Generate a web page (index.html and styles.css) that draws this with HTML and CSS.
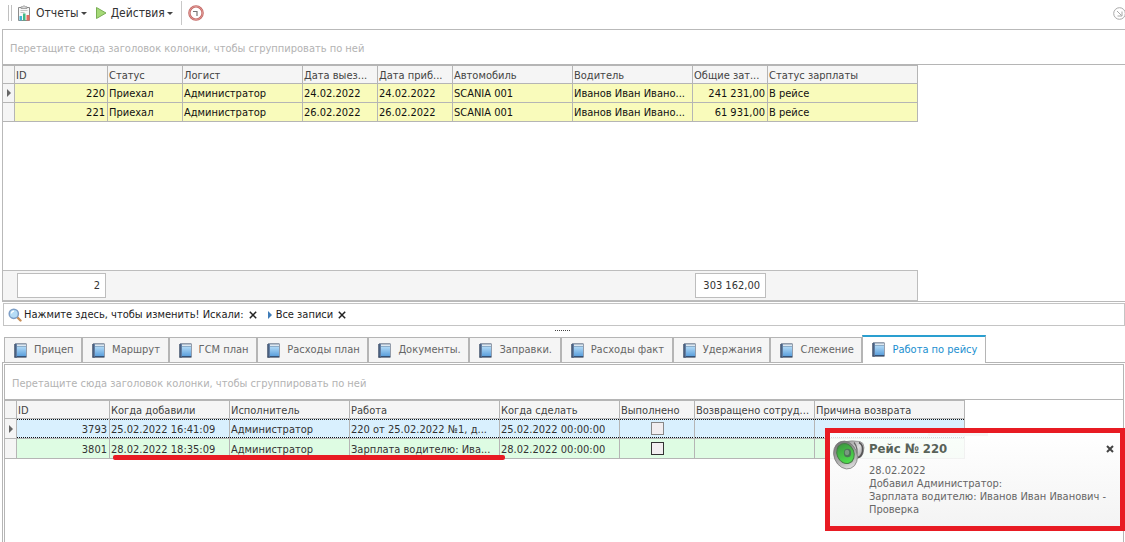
FILE: index.html
```html
<!DOCTYPE html>
<html lang="ru">
<head>
<meta charset="utf-8">
<title>Рейсы</title>
<link rel="stylesheet" href="styles.css">
</head>
<body>
<svg class="defs" aria-hidden="true">
  <defs>
    <linearGradient id="blue" x1="0" y1="0" x2="0" y2="1"><stop offset="0" stop-color="#b4dcf8"/><stop offset="1" stop-color="#5a9edb"/></linearGradient>
    <linearGradient id="spine" x1="0" y1="0" x2="1" y2="0"><stop offset="0" stop-color="#2b3d59"/><stop offset="1" stop-color="#6f8db3"/></linearGradient>
    <linearGradient id="metal" x1="0" y1="0" x2="1" y2="1"><stop offset="0" stop-color="#888"/><stop offset=".5" stop-color="#ddd"/><stop offset="1" stop-color="#666"/></linearGradient>
    <linearGradient id="rim" x1="0" y1="0" x2="0" y2="1"><stop offset="0" stop-color="#777"/><stop offset=".7" stop-color="#b5b5b5"/><stop offset="1" stop-color="#e0e0e0"/></linearGradient>
    <linearGradient id="cone" x1="0" y1="0" x2="0" y2="1"><stop offset="0" stop-color="#3c9a40"/><stop offset="1" stop-color="#4fe04d"/></linearGradient>
    <symbol id="book" viewBox="0 0 13 15">
      <path d="M1 .5h11.500v13.500H1z" fill="#31435f"/>
      <path d="M3 1h9v2H3z" fill="#eef5fb"/>
      <path d="M3 1.700h9" stroke="#70879f" stroke-width=".6"/>
      <path d="M3 3.300h9v10H3z" fill="url(#blue)"/>
      <path d="M.3 1h2.700v13.500H.3z" fill="url(#spine)"/>
      <path d="M.5 14.200h12" stroke="#24344d" stroke-width=".8"/>
    </symbol>
  </defs>
</svg>
<main class="page">
  <div class="toolbar" role="toolbar">
    <span class="grip"></span>
    <button class="tool" type="button">
      <svg class="tool-icon" viewBox="0 0 16 16"><path d="M2.500 2.500h11v13h-11z" fill="#f8f8f8" stroke="#8b8b8b"/><path d="M5 3.500V1.800h2L8 .5l1 1.300h2v1.700z" fill="#ddd" stroke="#888" stroke-width=".7"/><path d="M4.500 5.500h7M4.500 7.500h4" stroke="#c5c5c5"/><path d="M3.500 11h2.500v4.500H3.500z" fill="#41b3d5"/><path d="M7 8.500h2.500v7H7z" fill="#43b985"/><path d="M10.500 10h3v5.500h-3z" fill="#e46b61"/></svg>
      <span>Отчеты</span><span class="caret"></span>
    </button>
    <button class="tool" type="button">
      <svg class="tool-icon play" viewBox="0 0 12 14"><path d="M1.500 1.500l9.500 5.500-9.500 5.500z" fill="#a5d977" stroke="#79ae55" stroke-linejoin="round"/></svg>
      <span>Действия</span><span class="caret"></span>
    </button>
    <span class="divider"></span>
    <button class="tool" type="button" aria-label="Часы">
      <svg class="tool-icon" viewBox="0 0 16 16"><circle cx="8" cy="8" r="6.600" fill="#fff" stroke="#c56a67" stroke-width="2.400"/><circle cx="8" cy="8" r="6.600" fill="none" stroke="#e7a6a2" stroke-width=".7"/><path d="M5 6.500h4v4.500" fill="none" stroke="#777" stroke-width="1.200"/></svg>
    </button>
    <button class="tool corner" type="button" aria-label="Свернуть">
      <svg class="corner-icon" viewBox="0 0 13 13" fill="none" stroke="#a8a8a8"><circle cx="6.500" cy="6.500" r="5.800"/><path d="M4 4l4.500 4.500M9 4.500V9H4.500"/></svg>
    </button>
  </div>

  <section class="panel">
    <div class="group">Перетащите сюда заголовок колонки, чтобы сгруппировать по ней</div>
    <div class="grid-body">
      <table class="trips">
        <colgroup><col class="w12"><col class="w93"><col class="w75"><col class="w120"><col class="w75"><col class="w75"><col class="w120"><col class="w120"><col class="w75"><col class="w150"></colgroup>
        <thead><tr><th></th><th>ID</th><th>Статус</th><th>Логист</th><th>Дата выез...</th><th>Дата приб...</th><th>Автомобиль</th><th>Водитель</th><th>Общие зат...</th><th>Статус зарплаты</th></tr></thead>
        <tbody>
          <tr><td class="mark"><span class="arrow"></span></td><td class="num">220</td><td>Приехал</td><td>Администратор</td><td>24.02.2022</td><td>24.02.2022</td><td>SCANIA 001</td><td>Иванов Иван Ивано...</td><td class="num">241 231,00</td><td>В рейсе</td></tr>
          <tr><td class="mark"></td><td class="num">221</td><td>Приехал</td><td>Администратор</td><td>26.02.2022</td><td>26.02.2022</td><td>SCANIA 001</td><td>Иванов Иван Ивано...</td><td class="num">61 931,00</td><td>В рейсе</td></tr>
        </tbody>
      </table>
    </div>
    <div class="summary"><output class="total count">2</output><output class="total cost">303 162,00</output></div>
  </section>

  <div class="filter">
    <svg class="lens" viewBox="0 0 14 14"><path d="M9 9l3.500 3.500" stroke="#c78e58" stroke-width="2.400" stroke-linecap="round"/><circle cx="5.800" cy="5.800" r="4.600" fill="#b5dcf6" stroke="#7d9ec6" stroke-width="1.500"/><path d="M3.500 5.500a2.500 2.500 0 0 1 2.500-2.300" stroke="#fff" fill="none" stroke-width="1.200"/></svg>
    <span>Нажмите здесь, чтобы изменить! Искали:</span>
    <button class="clear" type="button" aria-label="Очистить поиск"><svg viewBox="0 0 8 8"><path d="M.8.8l6.400 6.400M7.200.8L.8 7.200"/></svg></button>
    <span class="arrow blue"></span>
    <span>Все записи</span>
    <button class="clear" type="button" aria-label="Убрать фильтр"><svg viewBox="0 0 8 8"><path d="M.8.8l6.400 6.400M7.200.8L.8 7.200"/></svg></button>
  </div>

  <div class="splitter"><span class="dots"></span></div>

  <div class="strip">
    <div class="tabs" role="tablist">
      <button class="tab" role="tab" type="button"><svg class="book"><use href="#book"/></svg>Прицеп</button>
      <button class="tab" role="tab" type="button"><svg class="book"><use href="#book"/></svg>Маршрут</button>
      <button class="tab" role="tab" type="button"><svg class="book"><use href="#book"/></svg>ГСМ план</button>
      <button class="tab" role="tab" type="button"><svg class="book"><use href="#book"/></svg>Расходы план</button>
      <button class="tab" role="tab" type="button"><svg class="book"><use href="#book"/></svg>Документы.</button>
      <button class="tab" role="tab" type="button"><svg class="book"><use href="#book"/></svg>Заправки.</button>
      <button class="tab" role="tab" type="button"><svg class="book"><use href="#book"/></svg>Расходы факт</button>
      <button class="tab" role="tab" type="button"><svg class="book"><use href="#book"/></svg>Удержания</button>
      <button class="tab" role="tab" type="button"><svg class="book"><use href="#book"/></svg>Слежение</button>
      <button class="tab active" role="tab" type="button" aria-selected="true"><svg class="book"><use href="#book"/></svg>Работа по рейсу</button>
    </div>
  </div>
  <section class="tab-page">
    <div class="inner">
      <div class="group">Перетащите сюда заголовок колонки, чтобы сгруппировать по ней</div>
      <table class="works">
        <colgroup><col class="w12"><col class="w93"><col class="w120"><col class="w120"><col class="w150"><col class="w120"><col class="w75"><col class="w120"><col class="w150"></colgroup>
        <thead><tr><th></th><th>ID</th><th>Когда добавили</th><th>Исполнитель</th><th>Работа</th><th>Когда сделать</th><th>Выполнено</th><th>Возвращено сотруд...</th><th>Причина возврата</th></tr></thead>
        <tbody>
          <tr class="selected"><td class="mark"><span class="arrow"></span></td><td class="num">3793</td><td>25.02.2022 16:41:09</td><td>Администратор</td><td>220 от 25.02.2022 №1, д...</td><td>25.02.2022 00:00:00</td><td class="check"><input class="box dim" type="checkbox" aria-label="Выполнено 3793"></td><td></td><td></td></tr>
          <tr class="green"><td class="mark"></td><td class="num">3801</td><td>28.02.2022 18:35:09</td><td>Администратор</td><td>Зарплата водителю: Ива...</td><td>28.02.2022 00:00:00</td><td class="check"><input class="box" type="checkbox" aria-label="Выполнено 3801"></td><td></td><td></td></tr>
        </tbody>
      </table>
    </div>
  </section>

  <span class="underline"></span>
  <span class="popup-edge"></span>
  <aside class="popup" role="alert">
    <svg class="speaker" viewBox="0 0 32 30"><path d="M10 2Q19 0 27 1.500q4 1 4 6l-1 6q-1 4-6 5L19 27z" fill="url(#metal)" stroke="#777" stroke-width=".6"/><path d="M26 2.500q4.500 2 3.500 9-1 5-4.500 6" fill="none" stroke="#555" stroke-width="1.600"/><path d="M21 2.500q5 6 2 15" fill="none" stroke="#666" stroke-width="1.200"/><ellipse cx="12.500" cy="15" rx="11.500" ry="14.300" transform="rotate(-22 12.500 15)" fill="url(#rim)" stroke="#777" stroke-width=".7"/><ellipse cx="12.500" cy="13.500" rx="8.500" ry="10.300" transform="rotate(-22 12.500 13.500)" fill="url(#cone)" stroke="#477d47"/><ellipse cx="14.500" cy="13" rx="3.600" ry="4.300" fill="#4d7456"/><ellipse cx="14" cy="12.500" rx="2.200" ry="2.700" fill="#7a9981"/></svg>
    <div class="message">
      <h2 class="title">Рейс № 220</h2>
      <p class="text">28.02.2022<br>Добавил Администратор:<br>Зарплата водителю: Иванов Иван Иванович - Проверка</p>
    </div>
    <button class="close" type="button" aria-label="Закрыть"><svg viewBox="0 0 8 8"><path d="M1 1l6 6M7 1L1 7"/></svg></button>
  </aside>
</main>
</body>
</html>
```

FILE: styles.css
```css
* { box-sizing: border-box; }
body {
  margin: 0;
  background: #fff;
  color: #333;
  font: 11px/14px "DejaVu Sans Condensed", "Noto Sans", sans-serif;
}
button { font: inherit; color: inherit; background: none; border: 0; padding: 0; }
.defs { position: absolute; width: 0; height: 0; }
.page {
  position: relative;
  display: flex;
  flex-direction: column;
  min-height: 100vh;
  overflow: hidden;
}

.toolbar { display: flex; align-items: center; height: 29px; padding: 0 0 3px 8px; font-size: 12px; }
.grip { width: 4px; height: 16px; border: solid #c0c0c0; border-width: 0 1px; margin-right: 4px; }
.tool { display: flex; align-items: center; gap: 4px; margin-right: 8px; }
.tool-icon { width: 16px; height: 16px; }
.play { width: 12px; height: 14px; }
.caret { margin-left: -2px; border: 3px solid transparent; border-top-color: #444; border-bottom: 0; }
.divider { width: 1px; height: 24px; background: #c8c8c8; margin-right: 6px; }
.corner { margin: 0 0 0 auto; }
.corner-icon { width: 13px; height: 13px; margin-right: -1px; }

.panel { margin-left: 2px; border: solid #b9b9b9; border-width: 1px 0 1px 1px; }
.group {
  height: 35px;
  padding: 12px 7px 0;
  border-bottom: 1px solid #b5b5b5;
  color: #b3b3b3;
}
.grid-body { min-height: 205px; }

table { table-layout: fixed; border-collapse: separate; border-spacing: 0; }
.trips { width: 915px; }
.works { width: 960px; }
.w12 { width: 12px; }
.w75 { width: 75px; }
.w93 { width: 93px; }
.w120 { width: 120px; }
.w150 { width: 150px; }
th, td {
  height: 19px;
  padding: 2px 2px 0 1px;
  border: solid #b5b5b5;
  border-width: 0 1px 1px 0;
  overflow: hidden;
  white-space: nowrap;
  text-align: left;
  font-weight: normal;
}
th { border-top-width: 1px; background: #f5f5f5; color: #444; }
.trips td { background: #f9fbbb; color: #111; }
.works td { height: 20px; }
.num { text-align: right; }
.trips .mark, .works .mark { background: #f5f5f5; padding: 0 4px; }
.arrow { display: block; width: 4px; border: 4px solid transparent; border-left-color: #666; border-right: 0; }
.arrow.blue { border-left-color: #3f7cb8; margin: 0 2px 0 6px; }
.selected td:not(.mark) {
  background:
    repeating-linear-gradient(90deg, #111 0 1px, transparent 1px 2px) top / 100% 1px no-repeat,
    repeating-linear-gradient(90deg, #111 0 1px, transparent 1px 2px) bottom / 100% 1px no-repeat,
    #d9f0fe;
}
.green td:not(.mark) { background: #defce3; }
.works .check { padding: 0; }
.box {
  appearance: none;
  display: block;
  width: 13px;
  height: 13px;
  margin: 0 auto;
  border: 1px solid #333;
  background: #f2eef0;
}
.dim { border-color: #888; }

.summary {
  display: flex;
  justify-content: space-between;
  width: 915px;
  height: 31px;
  padding: 2px 151px 0 14px;
  border: solid #bdbdbd;
  border-width: 1px 1px 1px 0;
  background: #f5f5f5;
}
.total { height: 25px; padding: 5px; border: 1px solid #bdbdbd; background: #fff; text-align: right; }
.count { width: 89px; }
.cost { width: 71px; }

.filter {
  display: flex;
  align-items: center;
  gap: 2px;
  height: 23px;
  margin: 1px 0 0 3px;
  padding-left: 4px;
  border: 1px solid #c4c4c4;
  color: #222;
}
.lens { width: 14px; height: 14px; }
.clear { display: flex; margin: 0 3px; }
.clear svg, .close svg { width: 8px; height: 8px; stroke: #222; stroke-width: 1.5; fill: none; }

.splitter { display: flex; justify-content: center; height: 9px; padding-top: 4px; }
.dots { width: 16px; height: 1px; background: repeating-linear-gradient(90deg, #444 0 1px, transparent 1px 2px); }

.strip { height: 28px; margin-left: 2px; padding-left: 2px; border-bottom: 1px solid #b5b5b5; }
.tabs { display: flex; align-items: flex-end; height: 27px; width: 982px; }
.tab {
  display: flex;
  flex: 1 0 auto;
  align-items: center;
  gap: 7px;
  height: 25px;
  padding: 0 7px 0 9px;
  border: solid #b5b5b5;
  border-width: 1px 1px 0;
  background: #f5f5f5;
  color: #666;
  white-space: nowrap;
}
.book { width: 13px; height: 15px; }
.active {
  height: 28px;
  margin-bottom: -1px;
  padding-bottom: 1px;
  border-top: 2px solid #2a9fd0;
  background: #fff;
  color: #1a8fd0;
}

.tab-page { display: flex; flex: 1; margin-left: 2px; padding: 1px 1px 0; border-left: 1px solid #b5b5b5; }
.inner { flex: 1; border: solid #b5b5b5; border-width: 1px 1px 0; }

.underline { position: absolute; left: 113px; top: 455px; width: 392px; height: 5px; border-radius: 2px; background: #e81b23; }
.popup-edge { position: absolute; right: 137px; top: 433px; width: 60px; height: 3px; background: #d6c6c6; }
.popup {
  position: absolute;
  right: 0;
  top: 428px;
  display: flex;
  gap: 4px;
  width: 300px;
  height: 103px;
  padding: 7px 12px 0 3px;
  border: 5px solid #e81b23;
  background: linear-gradient(rgba(255, 255, 255, .82), rgba(243, 243, 243, .95));
  color: #666;
}
.speaker { flex: none; width: 32px; height: 30px; }
.message { flex: 1; }
.title { margin: 0 0 6px; font-size: 13px; line-height: 18px; color: #586258; }
.text { margin: 0; line-height: 13px; }
.close { position: absolute; right: 6px; top: 12px; display: flex; }
.close svg { stroke: #444; stroke-width: 2; }
```
